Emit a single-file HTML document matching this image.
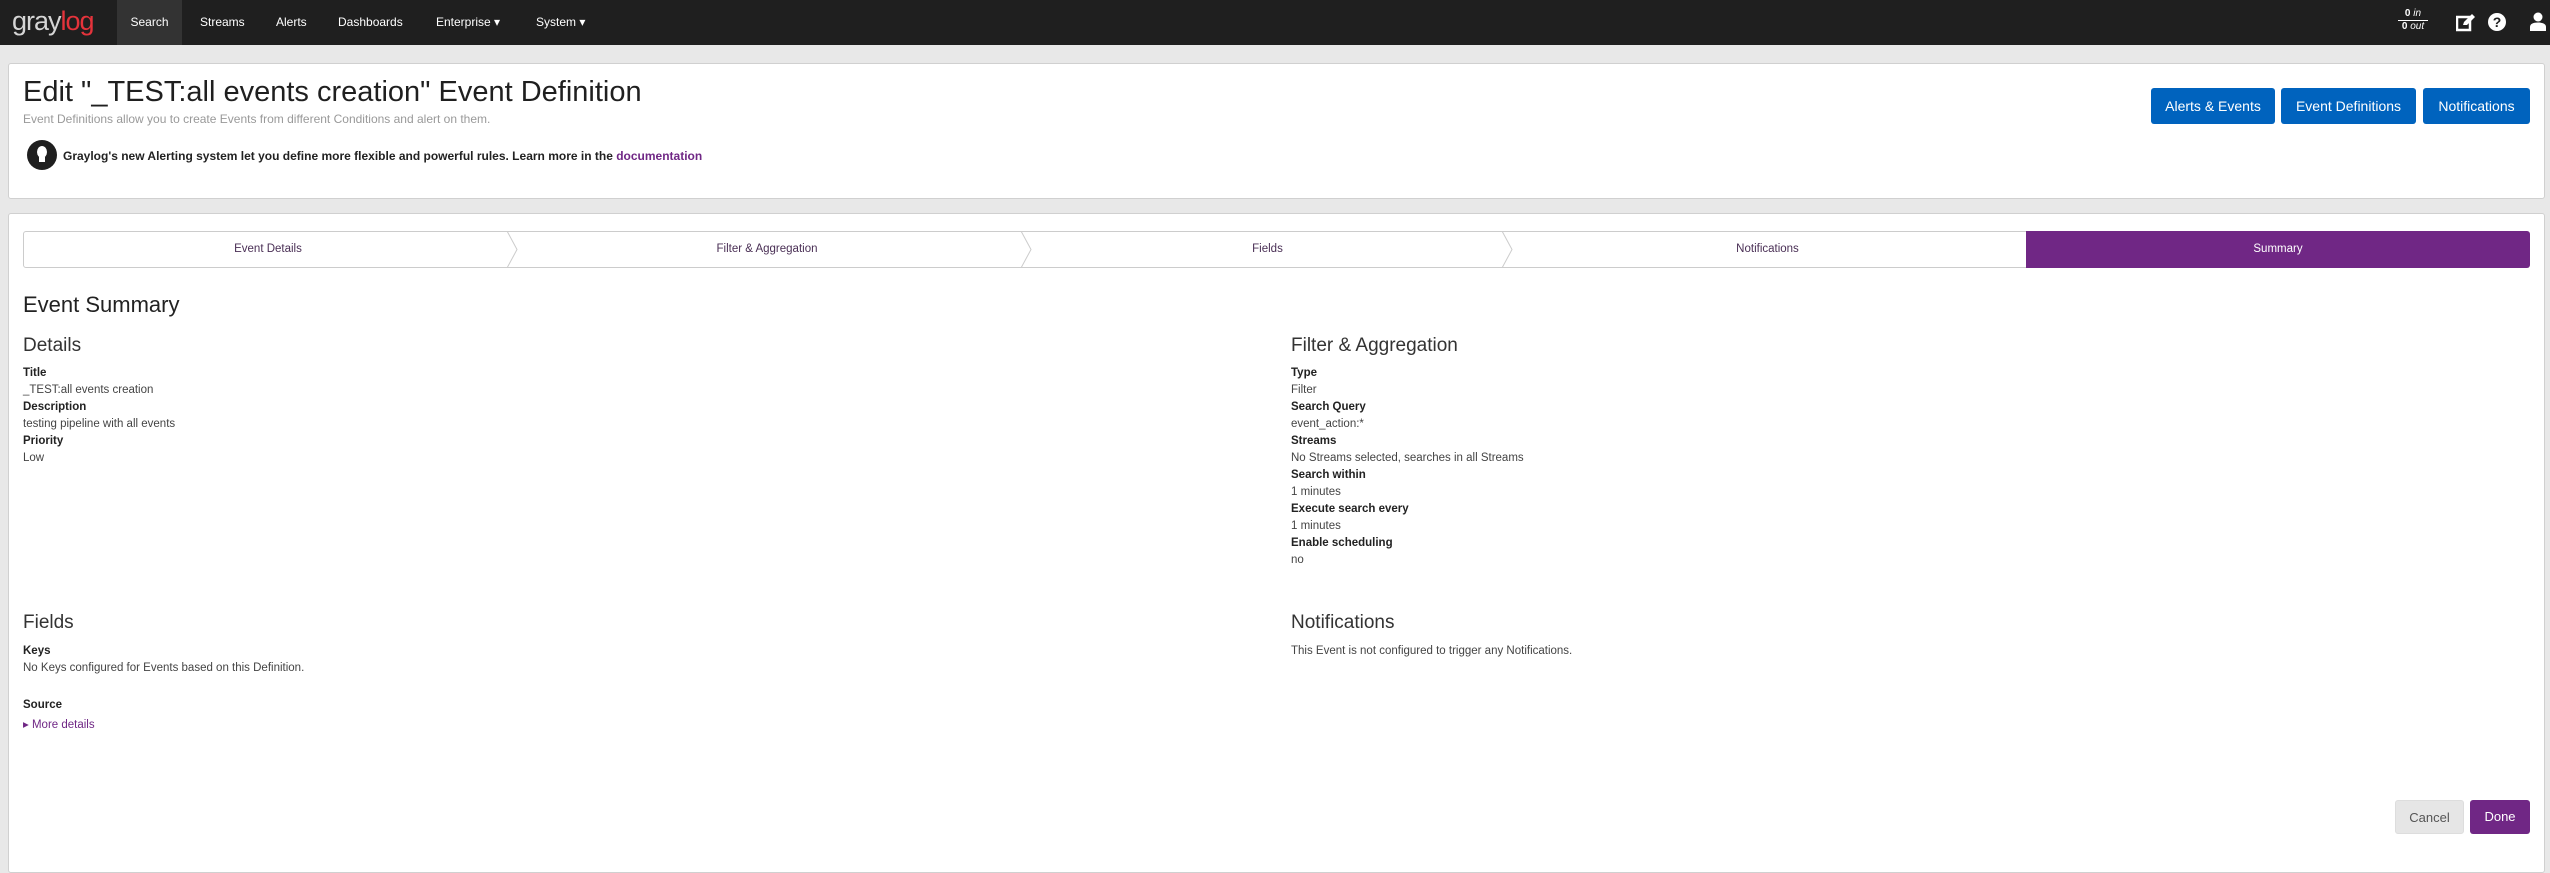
<!DOCTYPE html>
<html><head><meta charset="utf-8"><style>
*{margin:0;padding:0;box-sizing:border-box}
body{width:2550px;height:859px;background:#e8e8e8;font-family:"Liberation Sans",sans-serif;color:#1f1f1f;position:relative;overflow:hidden}
.a{position:absolute;white-space:nowrap}
.nav{position:absolute;left:0;top:0;width:2550px;height:45px;background:#1f1f1f}
.ni{position:absolute;top:0;height:45px;line-height:45px;color:#fff;font-size:12px}
.panel{position:absolute;background:#fff;border:1px solid #d0d0d0;border-radius:3px}
.btn{position:absolute;top:88px;height:36px;line-height:36px;background:#0063be;color:#fff;font-size:14px;text-align:center;border-radius:3px}
.st{position:absolute;top:231px;height:37px;line-height:37px;font-size:11.5px;color:#4a2f55;text-align:center}
.b{font-weight:bold;font-size:11.5px;color:#222}
.v{font-size:11.5px;color:#444}
.h{font-size:19px;color:#333}
</style></head><body>
<div class="nav">
 <div class="a" style="left:12px;top:6px;font-size:27px;color:#d5d5d5;letter-spacing:-1px;line-height:30px">gray<span style="color:#e5333b">log</span></div>
 <div class="ni" style="left:117px;width:65px;background:#333;text-align:center">Search</div>
 <div class="ni" style="left:200px">Streams</div>
 <div class="ni" style="left:276px">Alerts</div>
 <div class="ni" style="left:338px">Dashboards</div>
 <div class="ni" style="left:436px">Enterprise ▾</div>
 <div class="ni" style="left:536px">System ▾</div>
 <div class="a" style="left:2398px;top:8px;color:#fff;font-size:10px;line-height:12px;text-align:center"><b>0</b> <i>in</i><div style="border-top:1px solid #fff;width:30px"></div><b>0</b> <i>out</i></div>
 <svg class="a" style="left:2456px;top:13px" width="20" height="19" viewBox="0 0 20 19"><rect x="1" y="4" width="13" height="13" fill="none" stroke="#fff" stroke-width="2.5"/><path d="M7 12l1-3 8-8 3 3-8 8z" fill="#fff"/></svg>
 <div class="a" style="left:2488px;top:13px;width:18px;height:18px;border-radius:50%;background:#fff;color:#1f1f1f;font-size:14px;font-weight:bold;text-align:center;line-height:18px">?</div>
 <svg class="a" style="left:2530px;top:12px" width="16" height="20" viewBox="0 0 16 20"><circle cx="8" cy="5" r="4.5" fill="#fff"/><path d="M0 19v-4c0-3 3-4.5 8-4.5s8 1.5 8 4.5v4z" fill="#fff"/></svg>
</div>
<div class="panel" style="left:8px;top:63px;width:2537px;height:136px"></div>
<div class="a" style="left:23px;top:76px;font-size:29px;color:#1f1f1f">Edit "_TEST:all events creation" Event Definition</div>
<div class="a" style="left:23px;top:112px;font-size:12px;color:#999">Event Definitions allow you to create Events from different Conditions and alert on them.</div>
<div class="a" style="left:27px;top:140px;width:30px;height:30px;border-radius:50%;background:#1f1f1f"></div>
<div class="a" style="left:37px;top:146px;width:10px;height:12px;border-radius:50%;background:#fff"></div>
<div class="a" style="left:39px;top:157px;width:6px;height:5px;background:#fff"></div>
<div class="a" style="left:63px;top:149px;font-size:12px;font-weight:bold;color:#222">Graylog's new Alerting system let you define more flexible and powerful rules. Learn more in the <span style="color:#702785">documentation</span></div>
<div class="btn" style="left:2151px;width:124px">Alerts &amp; Events</div>
<div class="btn" style="left:2281px;width:135px">Event Definitions</div>
<div class="btn" style="left:2423px;width:107px">Notifications</div>

<div class="panel" style="left:8px;top:213px;width:2537px;height:660px"></div>
<div class="a" style="left:23px;top:231px;width:2006px;height:37px;border:1px solid #ccc;border-radius:3px"></div>
<svg class="a" style="left:505px;top:231px" width="1530" height="37"><g fill="none" stroke="#ccc"><path d="M2 0l10 18.5L2 37"/><path d="M516 0l10 18.5L516 37"/><path d="M997 0l10 18.5L997 37"/></g></svg>
<div class="a" style="left:2026px;top:231px;width:504px;height:37px;background:#702785;border-radius:0 3px 3px 0"></div>
<div class="st" style="left:23px;width:490px">Event Details</div>
<div class="st" style="left:517px;width:500px">Filter &amp; Aggregation</div>
<div class="st" style="left:1030px;width:475px">Fields</div>
<div class="st" style="left:1510px;width:515px">Notifications</div>
<div class="st" style="left:2026px;width:504px;color:#fff">Summary</div>

<div class="a" style="left:23px;top:292px;font-size:22px;color:#222">Event Summary</div>
<div class="a h" style="left:23px;top:335px">Details</div>
<div class="a b" style="left:23px;top:367px">Title</div>
<div class="a v" style="left:23px;top:384px">_TEST:all events creation</div>
<div class="a b" style="left:23px;top:401px">Description</div>
<div class="a v" style="left:23px;top:418px">testing pipeline with all events</div>
<div class="a b" style="left:23px;top:435px">Priority</div>
<div class="a v" style="left:23px;top:452px">Low</div>

<div class="a h" style="left:1291px;top:335px">Filter &amp; Aggregation</div>
<div class="a b" style="left:1291px;top:367px">Type</div>
<div class="a v" style="left:1291px;top:384px">Filter</div>
<div class="a b" style="left:1291px;top:401px">Search Query</div>
<div class="a v" style="left:1291px;top:418px">event_action:*</div>
<div class="a b" style="left:1291px;top:435px">Streams</div>
<div class="a v" style="left:1291px;top:452px">No Streams selected, searches in all Streams</div>
<div class="a b" style="left:1291px;top:469px">Search within</div>
<div class="a v" style="left:1291px;top:486px">1 minutes</div>
<div class="a b" style="left:1291px;top:503px">Execute search every</div>
<div class="a v" style="left:1291px;top:520px">1 minutes</div>
<div class="a b" style="left:1291px;top:537px">Enable scheduling</div>
<div class="a v" style="left:1291px;top:554px">no</div>

<div class="a h" style="left:23px;top:612px">Fields</div>
<div class="a b" style="left:23px;top:645px">Keys</div>
<div class="a v" style="left:23px;top:662px">No Keys configured for Events based on this Definition.</div>
<div class="a b" style="left:23px;top:699px">Source</div>
<div class="a v" style="left:23px;top:717px;color:#702785">▸ More details</div>

<div class="a h" style="left:1291px;top:612px">Notifications</div>
<div class="a v" style="left:1291px;top:645px">This Event is not configured to trigger any Notifications.</div>

<div class="a" style="left:2395px;top:800px;width:69px;height:34px;line-height:34px;background:#e6e6e6;border:1px solid #ddd;color:#555;font-size:13px;text-align:center;border-radius:3px">Cancel</div>
<div class="a" style="left:2470px;top:800px;width:60px;height:34px;line-height:34px;background:#702785;color:#fff;font-size:13px;text-align:center;border-radius:3px">Done</div>
</body></html>
